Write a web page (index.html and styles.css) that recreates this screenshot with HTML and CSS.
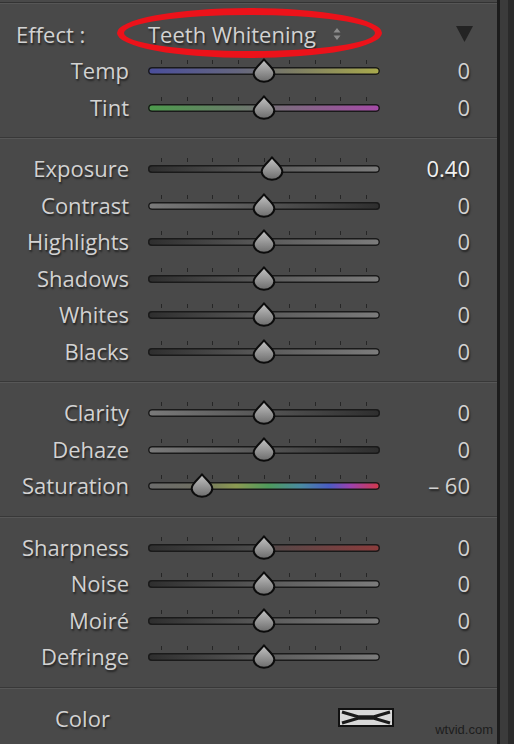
FILE: index.html
```html
<!DOCTYPE html>
<html lang="en">
<head>
  <meta charset="UTF-8">
  <meta name="viewport" content="width=device-width, initial-scale=1">
  <title>Basic Panel</title>
  <link rel="stylesheet" href="styles.css">
</head>
<body>
  <!-- shared slider knob -->
  <svg class="defs" width="0" height="0">
    <defs>
      <linearGradient id="knobFill" x1="0" y1="0" x2="0" y2="1">
        <stop offset="0" stop-color="#c4c4c4"/>
        <stop offset="1" stop-color="#6c6c6c"/>
      </linearGradient>
      <symbol id="knob" viewBox="0 0 24 25">
        <path d="M12 1.3 C14 4.8 22.3 10.5 22.3 15.2 A10.3 8.6 0 0 1 1.7 15.2 C1.7 10.5 10 4.8 12 1.3 Z"
              fill="url(#knobFill)" stroke="#0c0c0c" stroke-width="2" stroke-linejoin="round"/>
      </symbol>
    </defs>
  </svg>

  <div class="panel">
    <!-- Preset + white balance -->
    <section class="group group-top">
      <div class="effect-row">
        <span class="effect-label">Effect :</span>
        <span class="effect-name">Teeth Whitening</span>
        <svg class="updown" width="8" height="14" viewBox="0 0 8 14">
          <path d="M4 1 L7.5 5.5 H0.5 Z M4 13 L7.5 8.5 H0.5 Z" fill="#8c8c8c"/>
        </svg>
        <svg class="collapse" width="17" height="16" viewBox="0 0 17 16">
          <path d="M0 0 H17 L8.5 16 Z" fill="#232323"/>
        </svg>
        <span class="circle"></span>
      </div>

      <div class="row">
        <span class="label">Temp</span>
        <div class="slider">
          <div class="ticks"><i></i><i></i><i></i><i></i><i></i><i></i><i></i><i></i><i></i></div>
          <div class="track track-temp"><svg class="thumb" style="--pos: .5"><use href="#knob"/></svg></div>
        </div>
        <span class="value">0</span>
      </div>
      <div class="row">
        <span class="label">Tint</span>
        <div class="slider">
          <div class="ticks"><i></i><i></i><i></i><i></i><i></i><i></i><i></i><i></i><i></i></div>
          <div class="track track-tint"><svg class="thumb" style="--pos: .5"><use href="#knob"/></svg></div>
        </div>
        <span class="value">0</span>
      </div>
    </section>

    <!-- Tone -->
    <section class="group">
      <div class="row">
        <span class="label">Exposure</span>
        <div class="slider">
          <div class="ticks"><i></i><i></i><i></i><i></i><i></i><i></i><i></i><i></i><i></i></div>
          <div class="track track-up"><svg class="thumb" style="--pos: .54"><use href="#knob"/></svg></div>
        </div>
        <span class="value bright">0.40</span>
      </div>
      <div class="row">
        <span class="label">Contrast</span>
        <div class="slider">
          <div class="ticks"><i></i><i></i><i></i><i></i><i></i><i></i><i></i><i></i><i></i></div>
          <div class="track track-down"><svg class="thumb" style="--pos: .5"><use href="#knob"/></svg></div>
        </div>
        <span class="value">0</span>
      </div>
      <div class="row">
        <span class="label">Highlights</span>
        <div class="slider">
          <div class="ticks"><i></i><i></i><i></i><i></i><i></i><i></i><i></i><i></i><i></i></div>
          <div class="track track-up"><svg class="thumb" style="--pos: .5"><use href="#knob"/></svg></div>
        </div>
        <span class="value">0</span>
      </div>
      <div class="row">
        <span class="label">Shadows</span>
        <div class="slider">
          <div class="ticks"><i></i><i></i><i></i><i></i><i></i><i></i><i></i><i></i><i></i></div>
          <div class="track track-up"><svg class="thumb" style="--pos: .5"><use href="#knob"/></svg></div>
        </div>
        <span class="value">0</span>
      </div>
      <div class="row">
        <span class="label">Whites</span>
        <div class="slider">
          <div class="ticks"><i></i><i></i><i></i><i></i><i></i><i></i><i></i><i></i><i></i></div>
          <div class="track track-up"><svg class="thumb" style="--pos: .5"><use href="#knob"/></svg></div>
        </div>
        <span class="value">0</span>
      </div>
      <div class="row">
        <span class="label">Blacks</span>
        <div class="slider">
          <div class="ticks"><i></i><i></i><i></i><i></i><i></i><i></i><i></i><i></i><i></i></div>
          <div class="track track-up"><svg class="thumb" style="--pos: .5"><use href="#knob"/></svg></div>
        </div>
        <span class="value">0</span>
      </div>
    </section>

    <!-- Presence -->
    <section class="group">
      <div class="row">
        <span class="label">Clarity</span>
        <div class="slider">
          <div class="ticks"><i></i><i></i><i></i><i></i><i></i><i></i><i></i><i></i><i></i></div>
          <div class="track track-down"><svg class="thumb" style="--pos: .5"><use href="#knob"/></svg></div>
        </div>
        <span class="value">0</span>
      </div>
      <div class="row">
        <span class="label">Dehaze</span>
        <div class="slider">
          <div class="ticks"><i></i><i></i><i></i><i></i><i></i><i></i><i></i><i></i><i></i></div>
          <div class="track track-down"><svg class="thumb" style="--pos: .5"><use href="#knob"/></svg></div>
        </div>
        <span class="value">0</span>
      </div>
      <div class="row">
        <span class="label">Saturation</span>
        <div class="slider">
          <div class="ticks"><i></i><i></i><i></i><i></i><i></i><i></i><i></i><i></i><i></i></div>
          <div class="track track-sat"><svg class="thumb" style="--pos: .2"><use href="#knob"/></svg></div>
        </div>
        <span class="value">&ndash; 60</span>
      </div>
    </section>

    <!-- Detail -->
    <section class="group">
      <div class="row">
        <span class="label">Sharpness</span>
        <div class="slider">
          <div class="ticks"><i></i><i></i><i></i><i></i><i></i><i></i><i></i><i></i><i></i></div>
          <div class="track track-sharp"><svg class="thumb" style="--pos: .5"><use href="#knob"/></svg></div>
        </div>
        <span class="value">0</span>
      </div>
      <div class="row">
        <span class="label">Noise</span>
        <div class="slider">
          <div class="ticks"><i></i><i></i><i></i><i></i><i></i><i></i><i></i><i></i><i></i></div>
          <div class="track track-up"><svg class="thumb" style="--pos: .5"><use href="#knob"/></svg></div>
        </div>
        <span class="value">0</span>
      </div>
      <div class="row">
        <span class="label">Moiré</span>
        <div class="slider">
          <div class="ticks"><i></i><i></i><i></i><i></i><i></i><i></i><i></i><i></i><i></i></div>
          <div class="track track-up"><svg class="thumb" style="--pos: .5"><use href="#knob"/></svg></div>
        </div>
        <span class="value">0</span>
      </div>
      <div class="row">
        <span class="label">Defringe</span>
        <div class="slider">
          <div class="ticks"><i></i><i></i><i></i><i></i><i></i><i></i><i></i><i></i><i></i></div>
          <div class="track track-up"><svg class="thumb" style="--pos: .5"><use href="#knob"/></svg></div>
        </div>
        <span class="value">0</span>
      </div>
    </section>

    <!-- Color swatch -->
    <section class="group group-color">
      <span class="color-label">Color</span>
      <span class="swatch">
        <svg width="52" height="15" viewBox="0 0 52 15">
          <path d="M2 2 L18 6.8 L34 6.8 L50 2 M2 13 L18 8.2 L34 8.2 L50 13" fill="none" stroke="#1a1a1a" stroke-width="3"/>
        </svg>
      </span>
      <span class="credit">wtvid.com</span>
    </section>
  </div>

  <div class="edge"></div>
</body>
</html>
```

FILE: styles.css
```css
/* Dark panel layout */
body {
  margin: 0;
  display: flex;
  height: 744px;
  background: #494949;
  font-family: "Open Sans", "Liberation Sans", sans-serif;
  color: #d2d2d2;
  overflow: hidden;
}

.defs {
  position: absolute;
}

.panel {
  width: 497px;
  margin-top: 2px;
  border-top: 1px solid #333;
  box-shadow: inset 0 1px 0 #565656;
  position: relative;
}

/* each block of sliders, split by a dark + light line */
.group {
  padding: 11px 0 12px;
  border-bottom: 1px solid #383838;
  box-shadow: 0 1px 0 #575757;
  margin-bottom: 1px;
}

.group-top {
  padding-top: 13px;
}

/* Effect preset line */
.effect-row {
  position: relative;
  display: flex;
  align-items: center;
  height: 36px;
  padding-left: 16px;
  padding-right: 24px;
  font-size: 22px;
  text-shadow: 1px 2px 2px rgba(0, 0, 0, 0.55);
}

.effect-label {
  width: 132px;
}

.updown {
  margin-left: 17px;
}

.collapse {
  margin-left: auto;
  margin-top: -1px;
}

/* red marker ring around the preset name */
.circle {
  position: absolute;
  left: 117px;
  top: -8px;
  width: 265px;
  height: 50px;
  box-sizing: border-box;
  border: 7px solid #ec121a;
  border-radius: 50%;
  filter: blur(0.4px);
}

/* slider rows */
.row {
  display: grid;
  grid-template-columns: 148px 232px 90px;
  align-items: center;
  height: 36.5px;
  font-size: 22px;
  text-shadow: 1px 2px 2px rgba(0, 0, 0, 0.55);
}

.label {
  text-align: right;
  padding-right: 19px;
}

.value {
  text-align: right;
}

.value.bright {
  color: #f0f0f0;
}

.slider {
  display: flex;
  flex-direction: column;
  gap: 3px;
  padding-bottom: 5px;
}

.ticks {
  display: flex;
  justify-content: space-between;
  padding: 0 13px;
  height: 4px;
}

.ticks i {
  width: 1px;
  background: #262626;
}

.track {
  position: relative;
  height: 8px;
  border-radius: 4px;
  box-shadow: inset 0 0 0 1.5px #1a1a1a;
}

.thumb {
  position: absolute;
  top: -9px;
  left: calc(1px + var(--pos) * 206px);
  width: 24px;
  height: 25px;
}

/* track colours */
.track-temp {
  background: linear-gradient(90deg, #4a4e9c, #66677e 40%, #7a7a66 60%, #a9aa4c);
}

.track-tint {
  background: linear-gradient(90deg, #4c9c4c, #6a7a6a 40%, #7e6a80 60%, #a64aa8);
}

.track-up {
  background: linear-gradient(90deg, #2e2e2e, #5a5a5a 50%, #7c7c7c);
}

.track-down {
  background: linear-gradient(90deg, #7a7a7a, #555 50%, #2e2e2e);
}

.track-sat {
  background: linear-gradient(90deg, #6c6c6c 0%, #6e6e62 20%, #8c9a52 38%, #4e9a5c 52%, #4a8aa2 66%, #4a5cc2 78%, #9a42b0 87%, #d43848 100%);
}

.track-sharp {
  background: linear-gradient(90deg, #303030, #4a4a4a 45%, #8c3c3c);
}

/* bottom colour row */
.group-color {
  position: relative;
  display: flex;
  align-items: center;
  height: 38px;
  padding: 10px 103px 0 55px;
  border: none;
  box-shadow: none;
  font-size: 22px;
  text-shadow: 1px 2px 2px rgba(0, 0, 0, 0.55);
}

.swatch {
  margin-left: auto;
  display: flex;
  align-items: center;
  justify-content: center;
  width: 56px;
  height: 19px;
  box-sizing: border-box;
  border: 2px solid #111;
  background: #d9d9d9;
}

.credit {
  position: absolute;
  right: 4px;
  bottom: 0;
  font-family: "Liberation Sans", sans-serif;
  font-size: 13px;
  color: #1d1d1d;
  text-shadow: none;
}

/* dark frame at the right side */
.edge {
  flex: 1;
  background: linear-gradient(90deg, #1c1c1c 0 3px, #3b3b3b 3px 11px, #2a2a2a 11px);
}
```
